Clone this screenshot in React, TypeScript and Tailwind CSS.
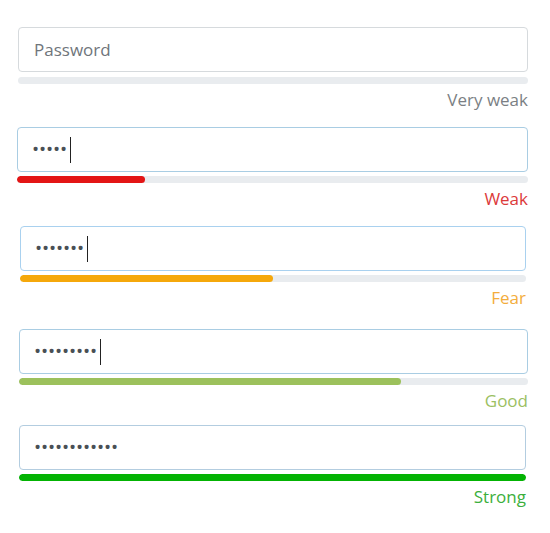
import React from "react";

type Block = {
  ml: string;
  w: string;
  mt: string;
  gap: string;
  dots: number;
  caret: boolean;
  bar: number;
  barColor: string;
  label: string;
  labelColor: string;
  border: string;
};

const blocks: Block[] = [
  { ml: "ml-[18px]", w: "w-[510px]", mt: "mt-[27px]", gap: "mt-[5px]", dots: 0, caret: false, bar: 0, barColor: "bg-[#e9ecef]", label: "Very weak", labelColor: "text-[#7b7f84]", border: "border-[#d6dadd]" },
  { ml: "ml-[17px]", w: "w-[511px]", mt: "mt-[15px]", gap: "mt-[4px]", dots: 5, caret: true, bar: 128, barColor: "bg-[#e31515]", label: "Weak", labelColor: "text-[#dc3a3a]", border: "border-[#a9cde3]" },
  { ml: "ml-[20px]", w: "w-[506px]", mt: "mt-[15px]", gap: "mt-[4px]", dots: 7, caret: true, bar: 253, barColor: "bg-[#f5a80b]", label: "Fear", labelColor: "text-[#f3ad3c]", border: "border-[#a9d1ef]" },
  { ml: "ml-[19px]", w: "w-[509px]", mt: "mt-[19px]", gap: "mt-[4px]", dots: 9, caret: true, bar: 382, barColor: "bg-[#9cc15c]", label: "Good", labelColor: "text-[#9bbf63]", border: "border-[#a9cde3]" },
  { ml: "ml-[19px]", w: "w-[507px]", mt: "mt-[12px]", gap: "mt-[4px]", dots: 12, caret: false, bar: 507, barColor: "bg-[#03b303]", label: "Strong", labelColor: "text-[#3caf3c]", border: "border-[#b3cde0]" },
];

export default function App() {
  return (
    <div
      className="w-[550px] h-[533px] bg-white overflow-hidden flex flex-col"
      style={{ fontFamily: '"Open Sans", "Noto Sans", sans-serif' }}
    >
      {blocks.map((b, i) => (
        <div key={i} className={`${b.ml} ${b.w} ${b.mt} flex flex-col`}>
          <div
            className={`h-[45px] border ${b.border} rounded-[4px] bg-white flex items-center ${b.dots === 0 ? "pl-[15px]" : "pl-[14px]"}`}
          >
            {b.dots === 0 ? (
              <span className="text-[17px] text-[#6f757b]">Password</span>
            ) : (
              <>
                <span className="text-[19px] leading-none tracking-[-0.15px] text-[#4a4f55]">
                  {"•".repeat(b.dots)}
                </span>
                {b.caret && <span className="ml-[3px] w-px h-[26px] bg-[#222]" />}
              </>
            )}
          </div>
          <div className={`${b.gap} h-[7px] rounded-full bg-[#e9ecef] overflow-hidden flex`}>
            <div className={`h-full rounded-full ${b.barColor}`} style={{ width: b.bar }} />
          </div>
          <div className={`mt-[4px] text-[17px] leading-[24px] text-right ${b.labelColor}`}>
            {b.label}
          </div>
        </div>
      ))}
    </div>
  );
}
